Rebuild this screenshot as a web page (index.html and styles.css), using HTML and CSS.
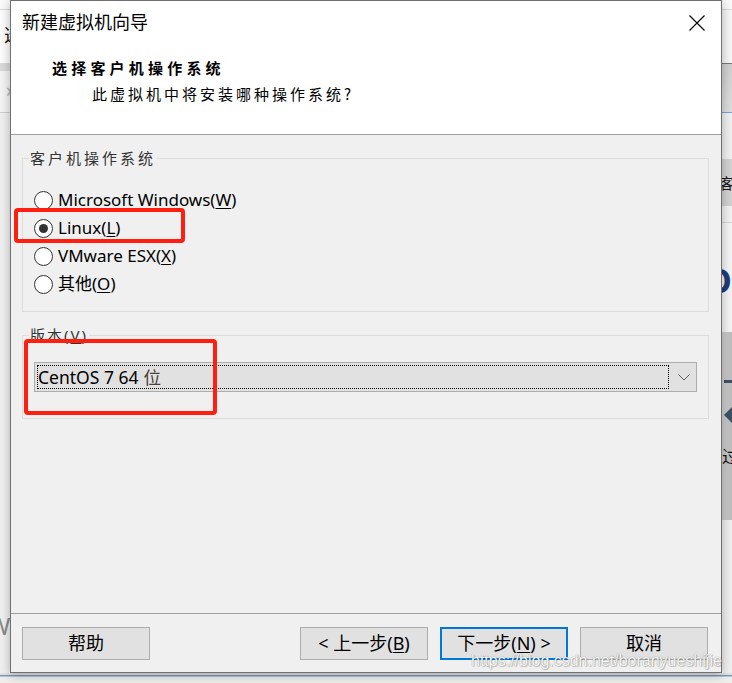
FILE: index.html
```html
<!DOCTYPE html>
<html lang="zh-CN">
<head>
<meta charset="utf-8">
<title>新建虚拟机向导</title>
<link rel="stylesheet" href="styles.css">
</head>
<body>
<div class="screen">
  <div class="desk">
    <div class="side side-left">
      <div class="l-top"></div>
      <div class="l-line"></div>
      <div class="l-white"><span class="l-glyph">选</span></div>
      <div class="l-band"></div>
      <div class="l-nav"><span class="l-chev">›</span></div>
      <div class="l-line2"></div>
      <div class="l-rest"><span class="l-w">W</span></div>
    </div>

    <div class="dialog">
      <div class="header">
        <div class="title-row">
          <div class="title">新建虚拟机向导</div>
          <svg class="close" width="16" height="16" viewBox="0 0 16 16" aria-hidden="true">
            <path d="M0.5 0.5 L15.5 15.5 M15.5 0.5 L0.5 15.5" stroke="#000" stroke-width="1.1" fill="none"/>
          </svg>
        </div>
        <div class="heading">选择客户机操作系统</div>
        <div class="subheading">此虚拟机中将安装哪种操作系统?</div>
      </div>

      <div class="content">
        <fieldset class="group">
          <legend>客户机操作系统</legend>
          <div class="os-list">
            <div class="option"><span class="radio"></span><span class="label">Microsoft Windows(<u>W</u>)</span></div>
            <div class="option"><span class="radio checked"></span><span class="label">Linux(<u>L</u>)</span></div>
            <div class="option"><span class="radio"></span><span class="label">VMware ESX(<u>X</u>)</span></div>
            <div class="option"><span class="radio"></span><span class="label">其他(<u>O</u>)</span></div>
          </div>
        </fieldset>

        <fieldset class="group group-ver">
          <legend>版本(<u>V</u>)</legend>
          <div class="ver-body">
            <div class="combo">
              <div class="combo-value">CentOS 7 64 <span class="wei">位</span></div>
              <div class="combo-arrow">
                <svg width="12" height="7" viewBox="0 0 12 7" aria-hidden="true">
                  <path d="M0.5 0.5 L6 6 L11.5 0.5" stroke="#606060" stroke-width="1" fill="none"/>
                </svg>
              </div>
            </div>
          </div>
        </fieldset>
      </div>

      <div class="footer">
        <button class="btn">帮助</button>
        <button class="btn btn-back">&lt; 上一步(<u>B</u>)</button>
        <button class="btn btn-default">下一步(<u>N</u>) &gt;</button>
        <button class="btn">取消</button>
      </div>
    </div>

    <div class="side side-right">
      <div class="r-top"></div>
      <div class="r-line"></div>
      <div class="r-pale"></div>
      <div class="r-dark"></div>
      <div class="r-grad"></div>
      <div class="r-blue"></div>
      <div class="r-light"></div>
      <div class="r-band"><span class="r-glyph">客</span></div>
      <div class="r-light2"></div>
      <div class="r-line2"></div>
      <div class="r-area"><span class="r-o">O</span></div>
      <div class="r-gray">
        <span class="r-dash"></span>
        <span class="r-tri"></span>
        <span class="r-guo">过</span>
      </div>
      <div class="r-rest"></div>
    </div>
  </div>
  <div class="bottom-strip">
    <div class="b-top"></div>
    <div class="b-line"></div>
    <div class="b-line-soft"></div>
  </div>

  <div class="mark mark-linux"></div>
  <div class="mark mark-version"></div>
  <div class="watermark">https://blog.csdn.net/boranyueshijie</div>
</div>
</body>
</html>
```

FILE: styles.css
```css
html, body {
  margin: 0;
  padding: 0;
}

body {
  width: 732px;
  height: 683px;
  overflow: hidden;
  background: #f0f0f0;
}

.screen {
  position: relative;
  width: 732px;
  height: 683px;
  font-family: "Noto Sans", "Noto Sans CJK SC", sans-serif;
  color: #000;
}

.desk {
  display: flex;
  height: 673px;
}

/* ---------- outside strips ---------- */
.side {
  width: 10px;
  flex: none;
  overflow: hidden;
  display: flex;
  flex-direction: column;
}

.l-top { height: 9px; background: #fbfbfb; }
.l-line { height: 1px; background: #d8d8d8; }
.l-white {
  height: 53px;
  background: #fdfdfd;
  box-sizing: border-box;
  padding: 15px 0 0 4px;
  white-space: nowrap;
}
.l-glyph {
  font-family: "Noto Sans CJK SC", sans-serif;
  font-size: 18px;
  line-height: 18px;
  display: block;
  color: #111;
}
.l-band { height: 8px; background: #d9d9d9; }
.l-nav {
  height: 41px;
  background: #f4f4f4;
  box-sizing: border-box;
  padding: 9px 0 0 6px;
}
.l-chev {
  display: block;
  font-size: 20px;
  line-height: 20px;
  color: #b4b4b4;
}
.l-line2 { height: 1px; background: #cfcfcf; }
.l-rest {
  flex: 1;
  background: #f0f0f0;
  box-sizing: border-box;
  padding-top: 500px;
  white-space: nowrap;
}
.l-w {
  display: block;
  margin-left: -12px;
  font-size: 24px;
  line-height: 26px;
  color: #8a8a8a;
}

.r-top { height: 9px; background: #fafafa; }
.r-line { height: 1px; background: #d9d9d9; }
.r-pale { height: 53px; background: #f6f6f6; }
.r-dark { height: 1px; background: #7a7a7a; }
.r-grad { height: 48px; background: linear-gradient(#cfcfcf, #dedede); }
.r-blue { height: 1px; background: #78a6d4; }
.r-light { height: 46px; background: #f0f0f0; }
.r-band {
  height: 47px;
  background: #d2d2d2;
  box-sizing: border-box;
  padding-top: 16px;
  white-space: nowrap;
}
.r-glyph {
  display: block;
  margin-left: -3px;
  font-family: "Noto Sans CJK SC", sans-serif;
  font-size: 15px;
  line-height: 16px;
  color: #1a1a1a;
}
.r-light2 { height: 16px; background: #f2f2f2; }
.r-line2 { height: 1px; background: #d4d4d4; }
.r-area {
  height: 109px;
  background: #f4f4f4;
  box-sizing: border-box;
  padding-top: 40px;
  white-space: nowrap;
}
.r-o {
  display: block;
  margin-left: -17px;
  font-size: 34px;
  font-weight: 700;
  line-height: 34px;
  color: #1e3c78;
}
.r-gray {
  height: 188px;
  background: linear-gradient(90deg, #cfcfcf, #bdbdbd);
  display: flex;
  flex-direction: column;
  padding-top: 48px;
  box-sizing: border-box;
}
.r-dash {
  display: block;
  width: 8px;
  height: 3px;
  margin-left: 2px;
  background: #3d5166;
}
.r-tri {
  display: block;
  width: 0;
  height: 0;
  margin-top: 24px;
  margin-left: 2px;
  border-top: 8px solid transparent;
  border-bottom: 8px solid transparent;
  border-right: 8px solid #3d5166;
}
.r-guo {
  display: block;
  margin-top: 24px;
  font-family: "Noto Sans CJK SC", sans-serif;
  font-size: 17px;
  line-height: 18px;
  color: #111;
}
.r-rest { flex: 1; background: #f0f0f0; }

.bottom-strip {
  height: 10px;
  display: flex;
  flex-direction: column;
  background: #eeeeee;
}
.b-top { height: 2px; background: #e2e2e2; }
.b-line { height: 1px; background: #7f98b3; }
.b-line-soft { height: 1px; background: #b8c6d4; }

/* ---------- dialog ---------- */
.dialog {
  width: 712px;
  flex: none;
  box-sizing: border-box;
  border: 1px solid #707070;
  background: #f0f0f0;
  display: flex;
  flex-direction: column;
  position: relative;
  z-index: 1;
  box-shadow: 0 2px 10px rgba(0, 0, 0, 0.28);
}

.header {
  height: 134px;
  box-sizing: border-box;
  background: #fff;
  border-bottom: 1px solid #a0a0a0;
  padding: 6px 0 0 11px;
}

.title-row {
  display: flex;
  justify-content: space-between;
  align-items: flex-start;
  height: 28px;
  padding-right: 16px;
}

.title {
  font-family: "Noto Sans CJK SC", sans-serif;
  font-size: 18px;
  line-height: 28px;
}

.close {
  display: block;
  margin-top: 8px;
}

.heading {
  margin: 23px 0 0 30px;
  font-family: "Noto Sans CJK SC", sans-serif;
  font-size: 15px;
  font-weight: 700;
  letter-spacing: 4.2px;
  line-height: 20px;
}

.subheading {
  margin: 6px 0 0 70px;
  font-family: "Noto Sans CJK SC", sans-serif;
  font-size: 15px;
  letter-spacing: 3px;
  line-height: 20px;
}

.content {
  flex: 1;
  padding: 0 12px 0 11px;
}

.group {
  margin: 15px 0 0;
  padding: 0;
  border: 1px solid #dcdcdc;
  min-width: 0;
}

.group legend {
  margin-left: 6px;
  padding: 0 1px;
  font-family: "Noto Sans", "Noto Sans CJK SC", sans-serif;
  font-size: 15px;
  letter-spacing: 3px;
  line-height: 16px;
  color: #333;
}

.group-ver legend {
  letter-spacing: 2px;
}

.os-list {
  padding: 20px 0 13px 11px;
}

.option {
  display: flex;
  align-items: center;
  gap: 5px;
  height: 28px;
  font-size: 17px;
  line-height: 28px;
}

.radio {
  width: 19px;
  height: 19px;
  box-sizing: border-box;
  border: 1px solid #333;
  border-radius: 50%;
  background: #fff;
  display: flex;
  align-items: center;
  justify-content: center;
  flex: none;
}

.radio.checked::after {
  content: "";
  width: 9px;
  height: 9px;
  border-radius: 50%;
  background: #333;
}

.label u,
.btn u,
.group legend u {
  text-underline-offset: 2px;
}

.ver-body {
  padding: 19px 11px 26px 11px;
}

.combo {
  display: flex;
  height: 30px;
  box-sizing: border-box;
  border: 1px solid #adadad;
  background: #e1e1e1;
  padding: 2px;
}

.combo-value {
  flex: 1;
  border: 1px dotted #000;
  display: flex;
  align-items: center;
  font-size: 17.5px;
  line-height: 22px;
  white-space: nowrap;
}

.wei {
  margin-left: 5px;
  color: #4a4038;
}

.combo-arrow {
  width: 25px;
  flex: none;
  box-sizing: border-box;
  padding-left: 4px;
  display: flex;
  align-items: center;
  justify-content: center;
}

.combo-arrow svg {
  display: block;
}

.footer {
  height: 59px;
  box-sizing: border-box;
  border-top: 1px solid #a0a0a0;
  padding: 13px 13px 0 11px;
  display: flex;
  align-items: flex-start;
}

.btn {
  width: 128px;
  height: 33px;
  box-sizing: border-box;
  border: 1px solid #adadad;
  background: #e1e1e1;
  margin: 0;
  padding: 0;
  font-family: "Noto Sans", "Noto Sans CJK SC", sans-serif;
  font-size: 18px;
  line-height: 31px;
  color: #000;
  white-space: nowrap;
}

.btn + .btn {
  margin-left: 12px;
}

.btn.btn-back {
  margin-left: auto;
}

.btn-default {
  border: 2px solid #0078d7;
  line-height: 29px;
}

/* ---------- overlays ---------- */
.mark {
  position: absolute;
  z-index: 2;
  box-sizing: border-box;
  border: 4px solid #fe1f10;
  border-radius: 4px;
}

.mark-linux {
  left: 14px;
  top: 208px;
  width: 171px;
  height: 35px;
}

.mark-version {
  left: 24px;
  top: 339px;
  width: 193px;
  height: 76px;
}

.watermark {
  position: absolute;
  z-index: 2;
  left: 471px;
  top: 652px;
  font-family: "Liberation Sans", sans-serif;
  font-size: 16px;
  line-height: 18px;
  color: #f6f6f6;
  text-shadow: 0 0 1px rgba(0, 0, 0, 0.45), 1px 1px 1px rgba(0, 0, 0, 0.2);
  white-space: nowrap;
}
```
